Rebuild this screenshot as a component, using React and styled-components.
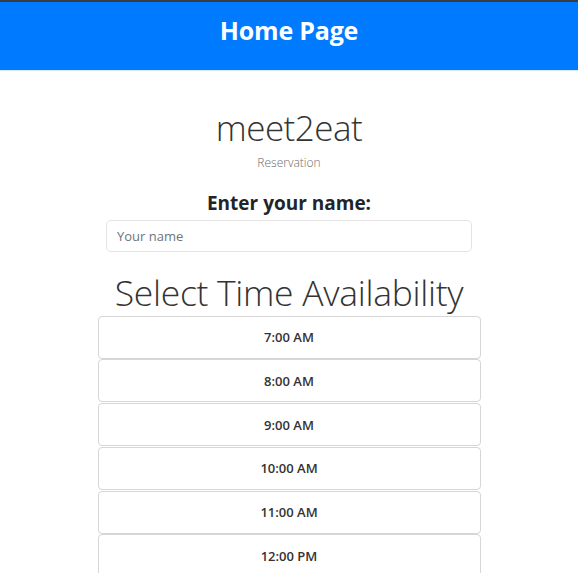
import React from "react";
import styled, { createGlobalStyle } from "styled-components";

const Global = createGlobalStyle`
  html, body { margin: 0; padding: 0; background: #fff; }
  body { font-family: "Open Sans", "Noto Sans", sans-serif; color: #212529; }
  * { box-sizing: border-box; }
`;

const Header = styled.header`
  border-top: 2px solid #3a3d40;
  background: #007bff;
  height: 71px;
  display: flex;
  align-items: center;
  justify-content: center;
  border-bottom: 1px solid #d9e9ff;
`;

const HeaderTitle = styled.h1`
  margin: 0;
  margin-top: -13px;
  color: #fff;
  font-size: 25px;
  font-weight: 700;
  letter-spacing: -0.2px;
`;

const Main = styled.main`
  display: flex;
  flex-direction: column;
  align-items: center;
  padding-top: 37px;
`;

const Brand = styled.div`
  font-size: 35px;
  font-weight: 300;
  color: #333;
  line-height: 40px;
  letter-spacing: -0.5px;
`;

const Sub = styled.div`
  font-size: 12px;
  font-weight: 300;
  color: #6c6c6c;
  margin-top: 6px;
  line-height: 18px;
`;

const Label = styled.label`
  font-size: 19px;
  font-weight: 700;
  color: #212529;
  margin-top: 18px;
  line-height: 26px;
`;

const Input = styled.input`
  width: 366px;
  height: 32px;
  margin-top: 4px;
  border: 1px solid #e3e3e3;
  border-radius: 5px;
  padding: 0 10px;
  font-family: inherit;
  font-size: 13px;
  color: #495057;
  outline: none;
  &::placeholder { color: #6c757d; }
`;

const Section = styled.h2`
  margin: 18px 0 0;
  font-size: 35.5px;
  font-weight: 300;
  color: #333;
  line-height: 44px;
  letter-spacing: -0.3px;
`;

const SlotList = styled.div`
  display: flex;
  flex-direction: column;
  width: 383px;
  margin-top: 1.5px;
  gap: 0.8px;
`;

const Slot = styled.button`
  height: 43px;
  background: #fff;
  border: 1px solid #d6d6d6;
  border-radius: 4px;
  font-family: inherit;
  font-size: 13px;
  font-weight: 600;
  color: #333;
  cursor: pointer;
`;

const times = ["7:00 AM", "8:00 AM", "9:00 AM", "10:00 AM", "11:00 AM", "12:00 PM"];

export default function App() {
  return (
    <>
      <Global />
      <Header>
        <HeaderTitle>Home Page</HeaderTitle>
      </Header>
      <Main>
        <Brand>meet2eat</Brand>
        <Sub>Reservation</Sub>
        <Label htmlFor="name">Enter your name:</Label>
        <Input id="name" placeholder="Your name" />
        <Section>Select Time Availability</Section>
        <SlotList>
          {times.map((t) => (
            <Slot key={t}>{t}</Slot>
          ))}
        </SlotList>
      </Main>
    </>
  );
}
